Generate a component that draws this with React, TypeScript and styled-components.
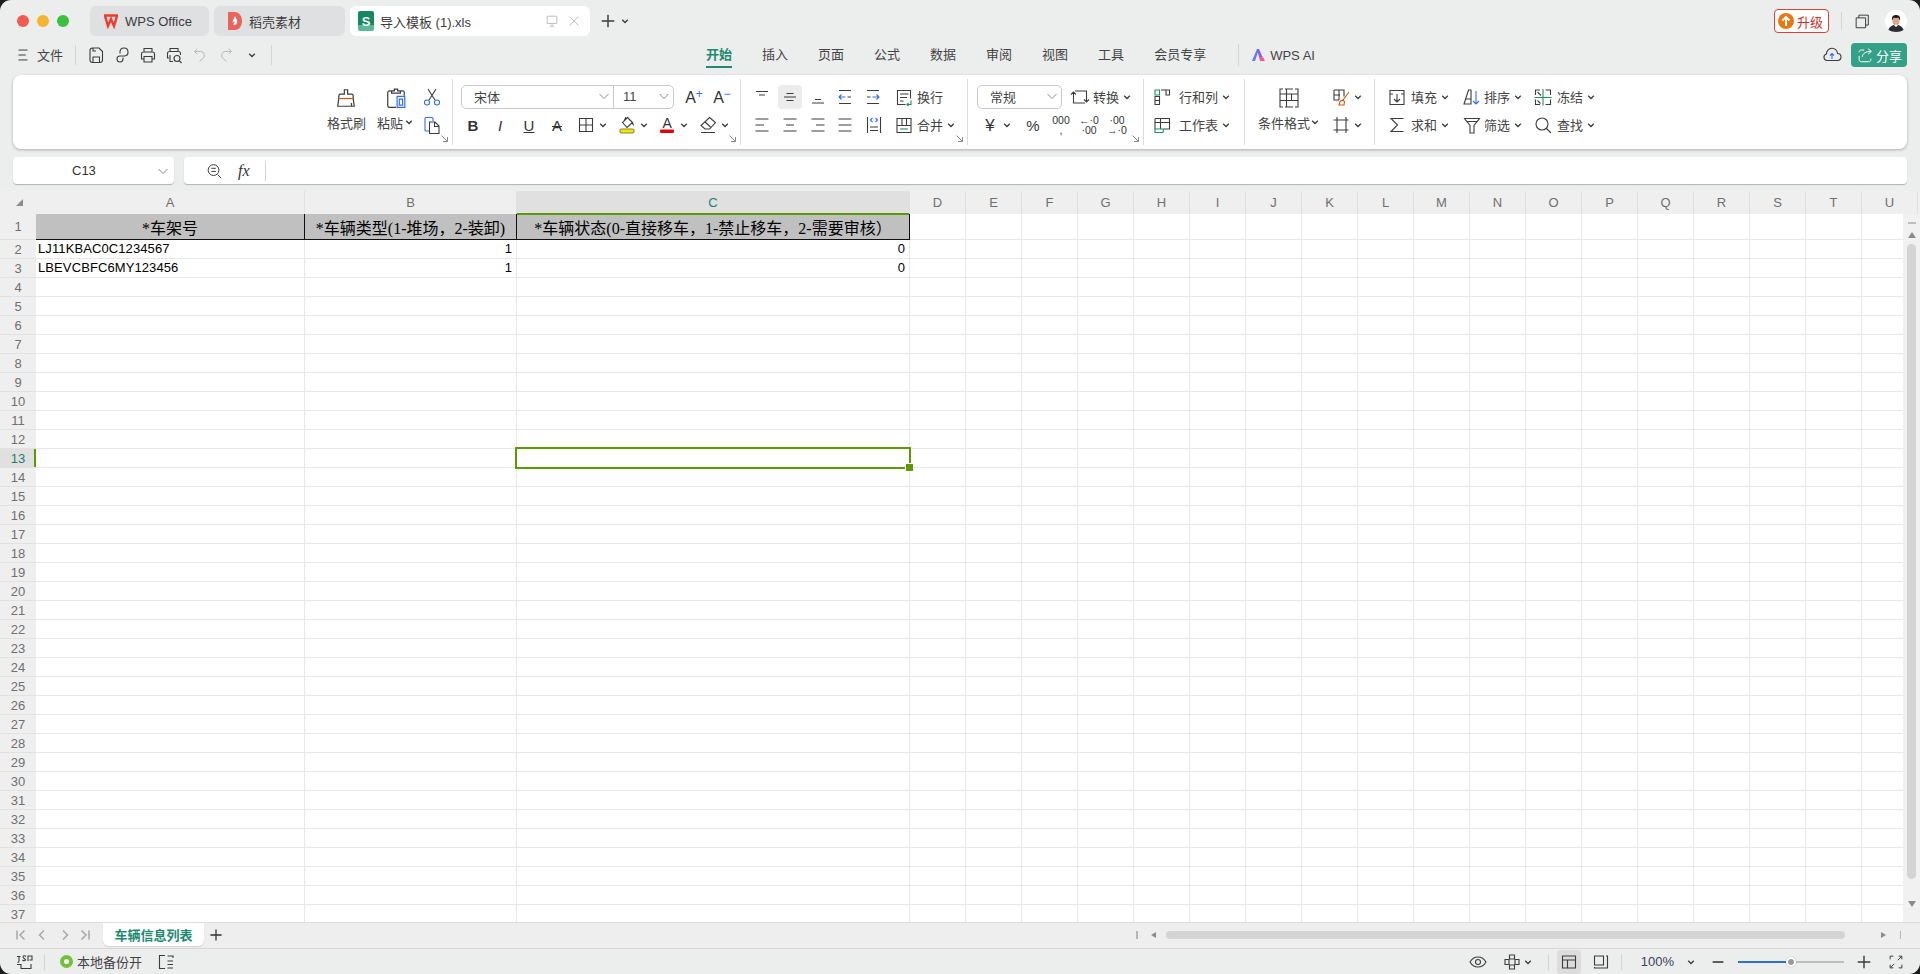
import type { ReactNode } from 'react'
import styled, { createGlobalStyle } from 'styled-components'

const sans = `"Liberation Sans", "Noto Sans CJK SC", sans-serif`

const GlobalStyle = createGlobalStyle`
  html, body { margin: 0; height: 100%; background: #1d1d1f; overflow: hidden; }
  * { box-sizing: border-box; }
`

const Window = styled.div`
  width: 1920px;
  height: 974px;
  display: flex;
  flex-direction: column;
  border-radius: 11px;
  overflow: hidden;
  background: #eceded;
  color: #444;
  font: 13px ${sans};
`

/* ---------- icons ---------- */

const Svg = styled.svg<{ $s: number }>`
  width: ${(p) => p.$s}px;
  height: ${(p) => p.$s}px;
  flex: none;
  fill: none;
  stroke: #3c3c3c;
  stroke-width: 1.1;
  .b { stroke: #2f6fed; }
  .g { stroke: #1f8f5f; }
  .o { stroke: #d2570a; }
  .m { stroke: #b5b5b5; }
`

const icons: Record<string, ReactNode> = {
  menu: <path d="M5 4.500h10M5 10h8M5 15.500h10" />,
  save: <path d="M4 5.500C4 4 5 3 6.500 3H13l3.500 3.500V15c0 1.500-1 2.500-2.500 2.500H6.500C5 17.500 4 16.500 4 15zM7 17.500V12h6.500v5.500M7 3v3h3" />,
  share: <path d="M8 8.500V7a4 4 0 1 1 4.500 4H7.500a3 3 0 1 0 3.500 3V12.500" />,
  print: <path d="M6 7V3.500h8V7M5.500 14H3.500V9c0-1.200.8-2 2-2h9c1.200 0 2 .8 2 2v5h-2M6 11.500h8v5.500H6z" />,
  preview: <path d="M6 6.500V3.500h8v3M5 13H3.500V8.500c0-1.200.8-2 2-2h9c1.200 0 2 .8 2 2V10M6 10v6.500h3M10 13.500a3 3 0 1 0 6 0 3 3 0 1 0-6 0M15 15.500l2.500 2.500" />,
  undo: <path className="m" d="M7 3L4 6l3 3M4 6h6.500a4.500 4.500 0 0 1 2 8.500L9.500 17" />,
  redo: <path className="m" d="M13 3l3 3-3 3M16 6H9.500a4.500 4.500 0 0 0-2 8.500l3 2.500" />,
  painter: (
    <>
      <path d="M8.500 2.500h3v4H15c.8 0 1.500.7 1.500 1.500v2l1 7.500H2.500l1-7.500V8c0-.8.700-1.500 1.500-1.500h3.500zM15 17.500v-3" />
      <path className="o" d="M4 10.500h12.500" />
    </>
  ),
  paste: (
    <>
      <path d="M6 3.500H4c-.8 0-1.500.7-1.500 1.500v12c0 .8.700 1.500 1.500 1.500h6M14 3.500h2c.8 0 1.500.7 1.500 1.500v3M6 5.500v-2h2.500V2h3v1.500H14v2z" />
      <path className="b" d="M11 8.500h7v10h-7zM13 11v5.500h3V11z" />
    </>
  ),
  cut: (
    <>
      <path d="M6 2l7 11M14 2L7 13" />
      <circle className="b" cx="5" cy="15.500" r="2.500" />
      <circle className="b" cx="15" cy="15.500" r="2.500" />
    </>
  ),
  copy: (
    <>
      <path className="b" d="M7 16H4c-.6 0-1-.4-1-1V3.500c0-.6.400-1 1-1h6c.6 0 1 .4 1 1V6" />
      <path d="M7.500 7h5.500l4 4v7.500H7.500zM12.500 7v4.500H17" />
    </>
  ),
  border: <path d="M3.500 3.500h13v13h-13zM10 3.500v13M3.500 10h13" />,
  bucket: (
    <>
      <path d="M10.500 2.500l5 5-5.500 5-4.500-5zM7.500 5l1.500-3M15.500 7.500l1 3" />
      <rect x="3" y="14" width="14" height="4" rx="1.500" fill="#f3e500" stroke="#8a8a3a" />
    </>
  ),
  eraser: <path d="M11.500 2.500l6 5-6 6.500H7L3 10.500zM6.500 6.500l6 5.500M3 17.500h14" />,
  alignT: <path d="M4 4.500h12M7 8h6" />,
  alignM: <path d="M6.500 6.500h7M4 10h12M6.500 13.500h7" />,
  alignB: <path d="M7 12.500h6M4 16h12" />,
  outdent: (
    <>
      <path d="M4 3.500h12M4 16.500h12M12.500 10H16" />
      <path className="b" d="M10.500 10H4M6.500 7.500L4 10l2.500 2.500" />
    </>
  ),
  indent: (
    <>
      <path d="M4 3.500h12M4 16.500h12M4 10h3.500" />
      <path className="b" d="M9.500 10H16M13.500 7.500L16 10l-2.500 2.500" />
    </>
  ),
  wrap: (
    <>
      <path d="M16.500 11.500v-8h-13v14h8M6 7h8.500M6 10.500h7M6 14h3.500" />
      <path className="g" d="M17 13.500v4h-4M14.500 16l-1.500 1.500 1.500 1.500" />
    </>
  ),
  left: <path d="M3.500 4h13M3.500 10H12M3.500 16h13" />,
  center: <path d="M3.500 4h13M6 10h8M3.500 16h13" />,
  right: <path d="M3.500 4h13M8 10h8.500M3.500 16h13" />,
  justify: <path d="M3.500 4h13M3.500 10h13M3.500 16h13" />,
  spread: (
    <>
      <path d="M3.500 2v16M16.500 2v16M6 12h8M6 15.500h8" />
      <path className="b" d="M8.500 3L6.500 5l2 2M11.500 3l2 2-2 2" />
    </>
  ),
  merge: (
    <>
      <path d="M3 3.500h14v14H3zM3 10.500h14M8 3.500v7M12.500 3.500v7" />
      <path className="g" d="M6 14h8" />
    </>
  ),
  convert: <path d="M5 4h11.500v11M14 12.500l2.500 2.500 2.500-2.500M15 16H3.500V5M1 7.500L3.500 5 6 7.500" />,
  rowcol: (
    <>
      <path className="g" d="M3 3h4.500v5H3z" />
      <path d="M9 3h8.500v5H14V3M3 9.500h4.500v8H3zM3 13.500h4.500" />
    </>
  ),
  sheet: (
    <>
      <path d="M3 3.500h14.500V14H12M3 14V3.500M3 7.500h14.500M8.500 3.500v10.500" />
      <path className="g" d="M3 14h8.500L11 17.500H3z" />
    </>
  ),
  cond: <path d="M6 3H3v18h3M18 3h3v18h-3M8 3h8M8 21h8M3 8h18M3 14.500h18M9.500 3v18M14.500 8v6.500" />,
  style: (
    <>
      <path d="M3 3h10v6.500M3 3v10h5M3 8h6M8 3v10" />
      <path className="o" d="M18 5l-6 8M9 14.500c1.500-1.500 3.500-1.500 4.500 0l-.5 3.500H8z" />
    </>
  ),
  crop: <path d="M6 2v16M15 2v16M2.500 5h15M2.500 15h15" />,
  fill: <path d="M3 3.500h14v14H3zM3 7h3M14 7h3M10 7v8M7 12l3 3 3-3" />,
  sum: <path d="M16.500 3.500H4L10.500 10 4 16.500h12.500" />,
  sort: (
    <>
      <path d="M6.500 3H9v14H2zM4 12h5" />
      <path className="b" d="M14 4v13M11 14l3 3 3-3" />
    </>
  ),
  filter: <path d="M2.500 3.500h15L12 10.500v7.500H8v-7.500zM5 6.500h10" />,
  freeze: (
    <>
      <path d="M2.500 8V3H7M12.500 3h5v5M17.500 12.500v5h-5M7 17.500H2.500v-5M4.500 5L8 8.500M4.500 13.500l3 3" />
      <path className="g" d="M1.500 10.500h17M10 2v16.500" />
    </>
  ),
  find: <path d="M3 9a6 6 0 1 0 12 0 6 6 0 1 0-12 0M13.500 13.500L18 18" />,
  formula: <path d="M3.500 9a6 6 0 1 0 12 0 6 6 0 1 0-12 0M7 7h5M7 10.500h5M14 14l4 4" />,
  monitor: <path className="m" d="M4 4h12v9H4zM10 13v3M7 16.500h6" />,
  close: <path className="m" d="M4.500 4.500l11 11M15.500 4.500l-11 11" />,
  plus: <path d="M10 3v14M3 10h14" strokeWidth="1.600" />,
  cloud: (
    <>
      <path d="M6 15.500H5a3.300 3.300 0 0 1-.5-6.500 5.500 5.500 0 0 1 11-.5 3.500 3.500 0 0 1 0 7z" />
      <path className="b" d="M10 14V8.500M8 10.500l2-2 2 2" />
    </>
  ),
  windows: <path d="M3.500 6.500h10.500v11H3.500zM6.500 6.500V3.500h10.500v11H14" />,
  shareOut: <path d="M9 4.500H6c-1.500 0-2.500 1-2.500 2.500M3.500 11v4c0 1.500 1 2.500 2.500 2.500h8c1.500 0 2.500-1 2.500-2.500v-1M7 12c.5-4 4-6 9.500-6M13.500 3l3.500 3-3.500 3" />,
  macro: <path d="M3 4.500h3.500M5 4.500V9c0 1-.6 1.500-1.500 1.500M8.500 8c1 1 2.500 1 3 0s-2.500-1.500-2.500-3 2-1.500 3-.5M14 9V4h4v4h-2.500M3 12.500h4v4h10V12" />,
  backup: <path d="M9 3.500H3.500v13H9M11.500 4H17v2M11.500 9H17M11.500 12.500H17M11.500 16H17" />,
  eye: <path d="M2 10c2-3.500 5-5 8-5s6 1.500 8 5c-2 3.500-5 5-8 5s-6-1.500-8-5zM7.500 10a2.500 2.500 0 1 0 5 0 2.500 2.500 0 1 0-5 0z" />,
  focus: <path d="M7.500 3h5v4h-5zM7.500 13h5v4h-5zM3 7.500h4v5H3zM13 7.500h4v5h-4z" />,
  grid: <path d="M3.500 4h13v12h-13zM3.500 8h13M8.500 8v8" />,
  page: <path d="M3.500 4h9v9h-9zM15 4h1.500v12H3.500v-1" />,
  minus: <path d="M4 10h12" strokeWidth="1.800" />,
  expand: <path d="M3.500 7V3.500H7M13 3.500h3.500V7M16.500 13v3.500H13M7 16.500H3.500V13M4 16l4-4M16 4l-4 4" />,
}

const I = ({ n, s = 20 }: { n: string; s?: number }) => (
  <Svg $s={s} viewBox={n === 'cond' ? '0 0 24 24' : '0 0 20 20'}>
    {icons[n]}
  </Svg>
)

const ChevSvg = styled.svg<{ $ml?: number }>`
  width: 8px;
  height: 8px;
  flex: none;
  margin-left: ${(p) => p.$ml ?? 1}px;
  fill: none;
  stroke: #3c3c3c;
  stroke-width: 1.3;
`

const Chev = ({ ml }: { ml?: number }) => (
  <ChevSvg $ml={ml} viewBox="0 0 8 8">
    <path d="M1.200 2.800L4 5.500l2.800-2.700" />
  </ChevSvg>
)

const ThinChev = styled.svg`
  width: 12px;
  height: 12px;
  flex: none;
  fill: none;
  stroke: #888;
  stroke-width: 1;
`

const Thin = () => (
  <ThinChev viewBox="0 0 12 12">
    <path d="M1.500 4L6 8.500 10.500 4" />
  </ThinChev>
)

const Gap = styled.span<{ $w: number }>`
  width: ${(p) => p.$w}px;
  flex: none;
`

/* ---------- title bar ---------- */

const TitleBar = styled.div`
  height: 42px;
  padding: 6px 0 6px 17px;
  display: flex;
  align-items: center;
`

const Lights = styled.div`
  display: flex;
  gap: 8px;
  margin-right: 21px;
`

const Light = styled.span<{ $c: string }>`
  width: 12px;
  height: 12px;
  border-radius: 50%;
  background: ${(p) => p.$c};
`

const Tab = styled.div<{ $w: number; $active?: boolean }>`
  width: ${(p) => p.$w}px;
  height: 30px;
  margin-right: 5px;
  padding-left: ${(p) => (p.$active ? 8 : 13)}px;
  display: flex;
  align-items: center;
  gap: 6px;
  border-radius: 6px;
  background: ${(p) => (p.$active ? '#fff' : '#dfe0e2')};
  color: #3c3c3c;
`

const SBadge = styled.span`
  width: 16px;
  height: 20px;
  border-radius: 2px;
  display: flex;
  align-items: center;
  justify-content: center;
  background: linear-gradient(#17875f 70%, #5cb894 70%);
  color: #fff;
  font-weight: 700;
  font-size: 13px;
`

const TabTools = styled.div`
  margin-left: auto;
  margin-right: 8px;
  display: flex;
  gap: 6px;
`

const NewTab = styled.div`
  margin-left: 4px;
  display: flex;
  align-items: center;
  gap: 4px;
`

const TitleRight = styled.div`
  margin-left: auto;
  padding-right: 13px;
  display: flex;
  align-items: center;
`

const Upgrade = styled.div`
  width: 55px;
  height: 24px;
  padding-left: 3px;
  display: flex;
  align-items: center;
  gap: 3px;
  border: 1px solid #d8423e;
  border-radius: 4px;
  background: #fff;
  color: #c9302c;
`

const UpDot = styled.span`
  width: 16px;
  height: 16px;
  border-radius: 50%;
  background: #e8780f;
  display: flex;
  align-items: center;
  justify-content: center;
  svg { stroke: #fff; stroke-width: 2; }
`

const VSep = styled.span<{ $h?: number; $ml?: number; $mr?: number }>`
  width: 1px;
  height: ${(p) => p.$h ?? 18}px;
  margin: 0 ${(p) => p.$mr ?? 0}px 0 ${(p) => p.$ml ?? 0}px;
  background: #d4d4d4;
  flex: none;
`

const Avatar = styled.svg`
  width: 22px;
  height: 22px;
  margin-left: 14px;
`

/* ---------- menu row ---------- */

const MenuRow = styled.div`
  height: 26px;
  margin-bottom: 7px;
  display: flex;
  align-items: center;
`

const QuickBar = styled.div`
  width: 706px;
  padding-left: 14px;
  display: flex;
  align-items: center;
`

const Quick = styled.span`
  width: 26px;
  display: flex;
  justify-content: center;
`

const MenuTab = styled.div<{ $active?: boolean }>`
  height: 26px;
  margin-right: 30px;
  padding-bottom: 2px;
  display: flex;
  align-items: center;
  color: ${(p) => (p.$active ? '#1e8a72' : '#444')};
  font-weight: ${(p) => (p.$active ? 700 : 400)};
  border-bottom: 2px solid ${(p) => (p.$active ? '#1e8a72' : 'transparent')};
`

const AiTab = styled.div`
  margin-left: 2px;
  padding-left: 12px;
  display: flex;
  align-items: center;
  gap: 4px;
  border-left: 1px solid #d4d4d4;
  height: 22px;
`

const MenuRight = styled.div`
  margin-left: auto;
  padding-right: 13px;
  display: flex;
  align-items: center;
  gap: 9px;
`

const ShareBtn = styled.div`
  width: 56px;
  height: 24px;
  padding-left: 5px;
  display: flex;
  align-items: center;
  gap: 2px;
  border-radius: 4px;
  background: #34a088;
  color: #fff;
  svg { stroke: #fff; }
`

/* ---------- ribbon ---------- */

const Ribbon = styled.div`
  height: 74px;
  margin: 0 13px;
  display: flex;
  justify-content: center;
  padding: 4px 0;
  border-radius: 8px;
  background: #fff;
  box-shadow: 0 1px 3px rgba(0, 0, 0, 0.28);
`

const Group = styled.div<{ $w: number; $pl: number; $last?: boolean }>`
  position: relative;
  width: ${(p) => p.$w}px;
  padding: 6px 0 0 ${(p) => p.$pl}px;
  display: flex;
  border-right: 1px solid ${(p) => (p.$last ? 'transparent' : '#dcdcdc')};
`

const Rows = styled.div<{ $ml?: number }>`
  margin-left: ${(p) => p.$ml ?? 0}px;
  display: flex;
  flex-direction: column;
  gap: 4px;
`

const Row = styled.div`
  height: 24px;
  display: flex;
  align-items: center;
`

const Btn = styled.span<{ $ml?: number; $active?: boolean }>`
  width: 24px;
  height: 24px;
  margin-left: ${(p) => p.$ml ?? 0}px;
  flex: none;
  display: flex;
  align-items: center;
  justify-content: center;
  border-radius: 4px;
  background: ${(p) => (p.$active ? '#ececec' : 'transparent')};
`

const Label = styled.span<{ $ml?: number }>`
  margin-left: ${(p) => p.$ml ?? 1}px;
  padding-bottom: 2px;
  white-space: nowrap;
`

const Big = styled.div<{ $w: number; $ml?: number }>`
  width: ${(p) => p.$w}px;
  margin-left: ${(p) => p.$ml ?? 0}px;
  display: flex;
  flex-direction: column;
  align-items: center;
`

const BigIcon = styled.div`
  height: 26px;
  display: flex;
  align-items: center;
`

const BigLabel = styled.div`
  height: 24px;
  padding-bottom: 2px;
  align-self: stretch;
  display: flex;
  align-items: center;
  white-space: nowrap;
`

const Select = styled.div<{ $w: number }>`
  width: ${(p) => p.$w}px;
  height: 24px;
  display: flex;
  align-items: center;
  border: 1px solid #c9c9c9;
  border-radius: 5px;
  background: #fff;
`

const SelectPart = styled.div<{ $w: number; $pl: number; $divider?: boolean }>`
  width: ${(p) => p.$w}px;
  height: 100%;
  padding: 0 3px 2px ${(p) => p.$pl}px;
  display: flex;
  align-items: center;
  justify-content: space-between;
  border-right: ${(p) => (p.$divider ? '1px solid #c9c9c9' : 'none')};
`

const Glyph = styled.span<{ $bold?: boolean; $italic?: boolean; $size?: number }>`
  font-family: "Liberation Sans", sans-serif;
  font-size: ${(p) => p.$size ?? 15}px;
  font-weight: ${(p) => (p.$bold ? 700 : 400)};
  font-style: ${(p) => (p.$italic ? 'italic' : 'normal')};
  color: #333;
  line-height: 1;
`

const Tiny = styled.span`
  color: #2f6fed;
  font-size: 12px;
  vertical-align: 5px;
  font-weight: 400;
`

const Mini = styled.span`
  font-family: "Liberation Sans", sans-serif;
  font-size: 10.500px;
  line-height: 10px;
  color: #333;
  text-align: center;
  white-space: nowrap;
`

const Expander = styled.svg`
  position: absolute;
  right: 4px;
  bottom: 3px;
  width: 7px;
  height: 7px;
  fill: none;
  stroke: #888;
  stroke-width: 1;
`

const Expand = () => (
  <Expander viewBox="0 0 7 7">
    <path d="M.5.500l5.500 5.500M6.500 2v4.500H2" />
  </Expander>
)

const ColorBar = () => (
  <Svg $s={20} viewBox="0 0 20 20">
    <text x="5.500" y="12.500" fontSize="14" fontFamily="Liberation Sans" fill="#333" stroke="none">
      A
    </text>
    <rect x="3" y="14.500" width="14" height="3.500" rx="1.200" fill="#e60000" stroke="none" />
  </Svg>
)

/* ---------- formula bar ---------- */

const FormulaRow = styled.div`
  height: 27px;
  margin: 8px 13px 7px;
  display: flex;
  gap: 10px;
`

const NameBox = styled.div`
  width: 161px;
  padding: 0 5px 0 59px;
  display: flex;
  align-items: center;
  justify-content: space-between;
  background: #fff;
  border-radius: 4px;
  box-shadow: 0 1px 1px rgba(0, 0, 0, 0.25);
  color: #333;
`

const FormulaBox = styled.div`
  flex: 1;
  padding-left: 21px;
  display: flex;
  align-items: center;
  background: #fff;
  border-radius: 4px;
  box-shadow: 0 1px 1px rgba(0, 0, 0, 0.25);
`

const Fx = styled.span`
  margin-left: 15px;
  width: 27px;
  font: italic 16px "Liberation Serif", serif;
  color: #333;
`

/* ---------- sheet ---------- */

const gridColumns = '36px 269px 212px 393px repeat(18, 56px)'

const Sheet = styled.div`
  position: relative;
  height: 731px;
  overflow: hidden;
  background: #fff;
`

const HeadRow = styled.div`
  display: grid;
  grid-template-columns: ${gridColumns};
  height: 23px;
  background: #efefef;
`

const ColHead = styled.div<{ $sel?: boolean }>`
  display: flex;
  align-items: center;
  justify-content: center;
  border-right: 1px solid #e0e0e0;
  background: ${(p) => (p.$sel ? '#e0e0e0' : '#efefef')};
  color: ${(p) => (p.$sel ? '#1e7f6c' : '#707070')};
  box-shadow: ${(p) => (p.$sel ? 'inset 0 -1px 0 #5b9a03' : 'none')};
`

const Corner = styled.div`
  display: flex;
  align-items: center;
  justify-content: center;
  padding-left: 2px;
  &::before {
    content: '';
    border-style: solid;
    border-width: 0 0 7px 7px;
    border-color: transparent transparent #8c8c8c transparent;
  }
`

const DataRow = styled.div<{ $h: number }>`
  display: grid;
  grid-template-columns: ${gridColumns};
  height: ${(p) => p.$h}px;
`

const RowHead = styled.div<{ $sel?: boolean }>`
  display: flex;
  align-items: center;
  justify-content: center;
  background: ${(p) => (p.$sel ? '#e0e0e0' : '#efefef')};
  color: ${(p) => (p.$sel ? '#1e7f6c' : '#707070')};
  border-bottom: 1px solid #e2e2e2;
  box-shadow: ${(p) => (p.$sel ? 'inset -2px 0 0 #5b9a03' : 'none')};
`

const Cell = styled.div<{ $right?: boolean }>`
  padding: 0 ${(p) => (p.$right ? 4 : 2)}px 2px 2px;
  display: flex;
  align-items: center;
  justify-content: ${(p) => (p.$right ? 'flex-end' : 'flex-start')};
  border-right: 1px solid #e8e8e8;
  border-bottom: 1px solid #e8e8e8;
  color: #000;
  letter-spacing: 0.1px;
  white-space: nowrap;
`

const TitleCell = styled.div<{ $sel?: boolean }>`
  display: flex;
  align-items: center;
  justify-content: center;
  background: #c0c0c0;
  border-right: 1px solid #111;
  border-bottom: 1px solid #111;
  color: #000;
  font: 16px "Liberation Serif", "Noto Sans CJK SC", serif;
  white-space: nowrap;
  box-shadow: ${(p) => (p.$sel ? 'inset 0 1px 0 #5b9a03' : 'none')};
`

const Selection = styled.div`
  position: absolute;
  left: 515px;
  top: 256px;
  width: 396px;
  height: 22px;
  border: 2px solid #5b9a03;
  &::after {
    content: '';
    position: absolute;
    right: -4px;
    bottom: -4px;
    width: 7px;
    height: 7px;
    background: #5b9a03;
    outline: 1px solid #fff;
  }
`

const VScroll = styled.div`
  position: absolute;
  right: 0;
  top: 23px;
  bottom: 0;
  width: 17px;
  padding-top: 8px;
  display: flex;
  flex-direction: column;
  align-items: center;
  background: #f1f1f1;
`

const Dash = styled.span`
  width: 8px;
  height: 2px;
  margin-bottom: 8px;
  background: #bdbdbd;
`

const triWidth = { up: '0 4px 6px 4px', down: '6px 4px 0 4px', left: '3.5px 5px 3.5px 0', right: '3.5px 0 3.5px 5px' }
const triColor = {
  up: 'transparent transparent #8c8c8c transparent',
  down: '#8c8c8c transparent transparent transparent',
  left: 'transparent #8c8c8c transparent transparent',
  right: 'transparent transparent transparent #8c8c8c',
}

const Tri = styled.span<{ $dir: 'up' | 'down' | 'left' | 'right' }>`
  flex: none;
  width: 0;
  height: 0;
  border-style: solid;
  border-width: ${(p) => triWidth[p.$dir]};
  border-color: ${(p) => triColor[p.$dir]};
`

const VThumb = styled.span`
  width: 9px;
  height: 635px;
  margin: 6px 0 22px;
  border-radius: 5px;
  background: #d4d4d4;
`

/* ---------- sheet tabs + status ---------- */

const TabsBar = styled.div`
  height: 26px;
  padding-left: 12px;
  display: flex;
  align-items: flex-start;
  border-top: 1px solid #dcdcdc;
  background: #eeeeee;
`

const NavIcon = styled.span<{ $w: number }>`
  width: ${(p) => p.$w}px;
  height: 24px;
  display: flex;
  align-items: center;
  justify-content: center;
  svg { fill: none; stroke: #a8a8a8; stroke-width: 1.5; width: 12px; height: 12px; }
`

const SheetTab = styled.div`
  width: 101px;
  height: 23px;
  margin-left: 9px;
  display: flex;
  align-items: center;
  justify-content: center;
  border-radius: 0 0 6px 6px;
  background: #fff;
  color: #1e8a72;
  font-weight: 700;
  box-shadow: 0 1px 1px rgba(0, 0, 0, 0.12);
`

const AddSheet = styled.span`
  margin: 4px 0 0 4px;
  display: flex;
  svg { stroke: #333; }
`

const HScroll = styled.div`
  margin-left: auto;
  height: 24px;
  padding-right: 19px;
  display: flex;
  align-items: center;
`

const SmallBar = styled.span<{ $mr?: number; $ml?: number }>`
  width: 1.5px;
  height: 8px;
  margin: 0 ${(p) => p.$mr ?? 0}px 0 ${(p) => p.$ml ?? 0}px;
  background: #b5b5b5;
`

const HThumb = styled.span`
  width: 679px;
  height: 8px;
  margin: 0 36px 0 10px;
  border-radius: 4px;
  background: #d4d4d4;
`

const StatusBar = styled.div`
  flex: 1;
  padding: 0 15px 0 14px;
  display: flex;
  align-items: center;
  border-top: 1px solid #d6d6d6;
`

const Dot = styled.span`
  width: 13px;
  height: 13px;
  margin: 0 4px 0 15px;
  border: 4px solid #6fc23a;
  border-radius: 50%;
  background: #fff;
`

const StatusRight = styled.div`
  margin-left: auto;
  display: flex;
  align-items: center;
`

const ViewBtn = styled.span<{ $active?: boolean; $mx?: number }>`
  width: 24px;
  height: 24px;
  margin: 0 ${(p) => p.$mx ?? 0}px;
  display: flex;
  align-items: center;
  justify-content: center;
  border-radius: 4px;
  background: ${(p) => (p.$active ? '#dcdcdc' : 'transparent')};
`

const Zoom = styled.span`
  margin: 0 13px 0 19px;
  color: #3c4258;
`

const Slider = styled.div`
  position: relative;
  width: 106px;
  height: 2px;
  margin: 0 11px;
  background: #bdbdbd;
`

const SliderFill = styled.div`
  width: 53px;
  height: 2px;
  background: #2f6fd0;
`

const SliderKnob = styled.span`
  position: absolute;
  left: 48px;
  top: -4px;
  width: 10px;
  height: 10px;
  border-radius: 50%;
  border: 2px solid #fff;
  background: #9a9a9a;
  box-shadow: 0 0 1px rgba(0, 0, 0, 0.4);
`

/* ---------- data ---------- */

const letters = 'ABCDEFGHIJKLMNOPQRSTU'.split('')
const blanks = letters.slice(3)
const rowsData: Record<number, string[]> = {
  2: ['LJ11KBAC0C1234567', '1', '0'],
  3: ['LBEVCBFC6MY123456', '1', '0'],
}
const rowNumbers = Array.from({ length: 36 }, (_, i) => i + 2)
const tabs = ['插入', '页面', '公式', '数据', '审阅', '视图', '工具', '会员专享']

export default function App() {
  return (
    <Window>
      <GlobalStyle />

      <TitleBar>
        <Lights>
          <Light $c="#f25b52" />
          <Light $c="#f5b52e" />
          <Light $c="#3cc13f" />
        </Lights>
        <Tab $w={119}>
          <svg width="16" height="16" viewBox="0 0 16 16">
            <path d="M1 2.500h14M2 3l3 10 3-7 3 7 3-10" fill="none" stroke="#ef3a2c" strokeWidth="2.400" />
          </svg>
          WPS Office
        </Tab>
        <Tab $w={131}>
          <svg width="16" height="20" viewBox="0 0 16 20">
            <path d="M1 1h7c4 0 7 4 7 9s-3 9-7 9H1z" fill="#e9645a" />
            <path d="M8 5c1 3 3 4 2 7-.5 2-3 2.500-4 1 1 0 2-1 1-3-.5 1-1 1-1 2-1-2 1-4 2-7z" fill="#fff" />
          </svg>
          稻壳素材
        </Tab>
        <Tab $w={240} $active>
          <SBadge>S</SBadge>
          导入模板 (1).xls
          <TabTools>
            <I n="monitor" s={16} />
            <I n="close" s={16} />
          </TabTools>
        </Tab>
        <NewTab>
          <I n="plus" s={18} />
          <Chev ml={0} />
        </NewTab>
        <TitleRight>
          <Upgrade>
            <UpDot>
              <svg width="10" height="12" viewBox="0 0 10 12" fill="none">
                <path d="M5 11V2M1.500 5.500L5 2l3.500 3.500" />
              </svg>
            </UpDot>
            升级
          </Upgrade>
          <VSep $ml={12} $mr={11} />
          <I n="windows" s={18} />
          <Avatar viewBox="0 0 22 22">
            <circle cx="11" cy="11" r="11" fill="#fff" />
            <path d="M7 8c0-4 8-4 8 0v2H7z" fill="#1c1c1c" />
            <ellipse cx="11" cy="11" rx="3.600" ry="4.600" fill="#d9a98c" />
            <path d="M7.500 7.500c1-2.500 6-2.500 7 0-2 .5-5 .5-7 0z" fill="#1c1c1c" />
            <path d="M3.500 20c1-3.500 3.500-4.500 5.500-5l2 2 2-2c2 .5 4.500 1.500 5.500 5-3.500 2.500-11 2.500-15 0z" fill="#2a2a30" />
            <path d="M9.300 15l1.700 2 1.700-2-1.700-.5z" fill="#f4f4f4" />
          </Avatar>
        </TitleRight>
      </TitleBar>

      <MenuRow>
        <QuickBar>
          <I n="menu" s={18} />
          <Label $ml={5}>文件</Label>
          <VSep $h={20} $ml={12} $mr={7} />
          <Quick><I n="save" /></Quick>
          <Quick><I n="share" /></Quick>
          <Quick><I n="print" /></Quick>
          <Quick><I n="preview" /></Quick>
          <Quick><I n="undo" s={18} /></Quick>
          <Quick><I n="redo" s={18} /></Quick>
          <Quick><Chev ml={0} /></Quick>
          <VSep $h={20} $ml={6} />
        </QuickBar>
        <MenuTab $active>开始</MenuTab>
        {tabs.map((t) => (
          <MenuTab key={t}>{t}</MenuTab>
        ))}
        <AiTab>
          <svg width="15" height="14" viewBox="0 0 15 14">
            <path d="M1 13L6 1h2L4 13z" fill="#5b7cf5" />
            <path d="M6 1h2l3.500 8H8z" fill="#8a5cf0" />
            <path d="M8 9h4l2 4H9z" fill="#f05c9a" />
          </svg>
          WPS AI
        </AiTab>
        <MenuRight>
          <I n="cloud" />
          <ShareBtn>
            <I n="shareOut" s={18} />
            分享
          </ShareBtn>
        </MenuRight>
      </MenuRow>

      <Ribbon>
        <Group $w={133} $pl={7}>
          <Big $w={38}>
            <BigIcon><I n="painter" s={22} /></BigIcon>
            <BigLabel>格式刷</BigLabel>
          </Big>
          <Big $w={38} $ml={12}>
            <BigIcon><I n="paste" s={22} /></BigIcon>
            <BigLabel>粘贴<Chev ml={2} /></BigLabel>
          </Big>
          <Rows $ml={-1}>
            <Row><Btn $ml={6}><I n="cut" /></Btn></Row>
            <Row><Btn $ml={6}><I n="copy" /></Btn></Row>
          </Rows>
          <Expand />
        </Group>

        <Group $w={288} $pl={8}>
          <Rows>
            <Row>
              <Select $w={213}>
                <SelectPart $w={152} $pl={12} $divider>宋体<Thin /></SelectPart>
                <SelectPart $w={59} $pl={9}>11<Thin /></SelectPart>
              </Select>
              <Btn $ml={8}><Glyph $size={16}>A<Tiny>+</Tiny></Glyph></Btn>
              <Btn $ml={4}><Glyph $size={16}>A<Tiny>−</Tiny></Glyph></Btn>
            </Row>
            <Row>
              <Btn><Glyph $bold>B</Glyph></Btn>
              <Btn $ml={3}><Glyph $italic>I</Glyph></Btn>
              <Btn $ml={5}><Glyph><u>U</u></Glyph></Btn>
              <Btn $ml={4}><Glyph><s>A</s></Glyph></Btn>
              <Btn $ml={5}><I n="border" /></Btn><Chev />
              <Btn $ml={8}><I n="bucket" /></Btn><Chev />
              <Btn $ml={7}><ColorBar /></Btn><Chev />
              <Btn $ml={8}><I n="eraser" /></Btn><Chev />
            </Row>
          </Rows>
          <Expand />
        </Group>

        <Group $w={227} $pl={9}>
          <Rows>
            <Row>
              <Btn><I n="alignT" /></Btn>
              <Btn $ml={4} $active><I n="alignM" /></Btn>
              <Btn $ml={4}><I n="alignB" /></Btn>
              <Btn $ml={3}><I n="outdent" /></Btn>
              <Btn $ml={4}><I n="indent" /></Btn>
              <Btn $ml={7}><I n="wrap" /></Btn>
              <Label>换行</Label>
            </Row>
            <Row>
              <Btn><I n="left" /></Btn>
              <Btn $ml={4}><I n="center" /></Btn>
              <Btn $ml={4}><I n="right" /></Btn>
              <Btn $ml={3}><I n="justify" /></Btn>
              <Btn $ml={5}><I n="spread" /></Btn>
              <Btn $ml={6}><I n="merge" /></Btn>
              <Label>合并</Label>
              <Chev ml={4} />
            </Row>
          </Rows>
          <Expand />
        </Group>

        <Group $w={176} $pl={9}>
          <Rows>
            <Row>
              <Select $w={85}>
                <SelectPart $w={83} $pl={12}>常规<Thin /></SelectPart>
              </Select>
              <Btn $ml={6}><I n="convert" /></Btn>
              <Label>转换</Label>
              <Chev ml={4} />
            </Row>
            <Row>
              <Btn $ml={1}><Glyph $size={17}>¥</Glyph></Btn><Chev />
              <Btn $ml={10}><Glyph $size={15}>%</Glyph></Btn>
              <Btn $ml={4}><Mini>000<br />,</Mini></Btn>
              <Btn $ml={4}><Mini>←·0<br />·00</Mini></Btn>
              <Btn $ml={4}><Mini>·00<br />→·0</Mini></Btn>
            </Row>
          </Rows>
          <Expand />
        </Group>

        <Group $w={101} $pl={6}>
          <Rows>
            <Row>
              <Btn><I n="rowcol" /></Btn>
              <Label $ml={5}>行和列</Label>
              <Chev ml={4} />
            </Row>
            <Row>
              <Btn><I n="sheet" /></Btn>
              <Label $ml={5}>工作表</Label>
              <Chev ml={4} />
            </Row>
          </Rows>
        </Group>

        <Group $w={130} $pl={13}>
          <Big $w={62}>
            <BigIcon><I n="cond" s={24} /></BigIcon>
            <BigLabel>条件格式<Chev ml={1} /></BigLabel>
          </Big>
          <Rows $ml={9}>
            <Row><Btn><I n="style" /></Btn><Chev /></Row>
            <Row><Btn><I n="crop" /></Btn><Chev /></Row>
          </Rows>
        </Group>

        <Group $w={225} $pl={10} $last>
          <Rows>
            <Row>
              <Btn><I n="fill" /></Btn>
              <Label $ml={2}>填充</Label>
              <Chev ml={4} />
              <Btn $ml={11}><I n="sort" /></Btn>
              <Label $ml={0}>排序</Label>
              <Chev ml={4} />
              <Btn $ml={9}><I n="freeze" /></Btn>
              <Label $ml={2}>冻结</Label>
              <Chev ml={4} />
            </Row>
            <Row>
              <Btn><I n="sum" /></Btn>
              <Label $ml={2}>求和</Label>
              <Chev ml={4} />
              <Btn $ml={11}><I n="filter" /></Btn>
              <Label $ml={0}>筛选</Label>
              <Chev ml={4} />
              <Btn $ml={9}><I n="find" /></Btn>
              <Label $ml={2}>查找</Label>
              <Chev ml={4} />
            </Row>
          </Rows>
        </Group>
      </Ribbon>

      <FormulaRow>
        <NameBox>
          C13
          <Thin />
        </NameBox>
        <FormulaBox>
          <I n="formula" s={18} />
          <Fx>fx</Fx>
          <VSep $h={20} />
        </FormulaBox>
      </FormulaRow>

      <Sheet>
        <HeadRow>
          <Corner />
          {letters.map((l) => (
            <ColHead key={l} $sel={l === 'C'}>{l}</ColHead>
          ))}
        </HeadRow>
        <DataRow $h={26}>
          <RowHead>1</RowHead>
          <TitleCell>*车架号</TitleCell>
          <TitleCell>*车辆类型(1-堆场，2-装卸)</TitleCell>
          <TitleCell $sel>*车辆状态(0-直接移车，1-禁止移车，2-需要审核）</TitleCell>
          {blanks.map((l) => (
            <Cell key={l} />
          ))}
        </DataRow>
        {rowNumbers.map((n) => (
          <DataRow key={n} $h={19}>
            <RowHead $sel={n === 13}>{n}</RowHead>
            <Cell>{rowsData[n]?.[0]}</Cell>
            <Cell $right>{rowsData[n]?.[1]}</Cell>
            <Cell $right>{rowsData[n]?.[2]}</Cell>
            {blanks.map((l) => (
              <Cell key={l} />
            ))}
          </DataRow>
        ))}
        <Selection />
        <VScroll>
          <Dash />
          <Tri $dir="up" />
          <VThumb />
          <Tri $dir="down" />
        </VScroll>
      </Sheet>

      <TabsBar>
        <NavIcon $w={18}>
          <svg viewBox="0 0 12 12"><path d="M2 1.500v9M9.500 1.500L5 6l4.500 4.500" /></svg>
        </NavIcon>
        <NavIcon $w={23}>
          <svg viewBox="0 0 12 12"><path d="M8 1.500L3.500 6 8 10.500" /></svg>
        </NavIcon>
        <NavIcon $w={23}>
          <svg viewBox="0 0 12 12"><path d="M4 1.500L8.500 6 4 10.500" /></svg>
        </NavIcon>
        <NavIcon $w={18}>
          <svg viewBox="0 0 12 12"><path d="M10 1.500v9M2.500 1.500L7 6l-4.500 4.500" /></svg>
        </NavIcon>
        <SheetTab>车辆信息列表</SheetTab>
        <AddSheet><I n="plus" s={16} /></AddSheet>
        <HScroll>
          <SmallBar $mr={13} />
          <Tri $dir="left" />
          <HThumb />
          <Tri $dir="right" />
          <SmallBar $ml={14} />
        </HScroll>
      </TabsBar>

      <StatusBar>
        <I n="macro" />
        <VSep $h={16} $ml={10} $mr={0} />
        <Dot />
        本地备份开
        <Gap $w={14} />
        <I n="backup" />
        <StatusRight>
          <I n="eye" />
          <Gap $w={14} />
          <I n="focus" />
          <Chev ml={2} />
          <VSep $h={16} $ml={16} $mr={8} />
          <ViewBtn $active><I n="grid" /></ViewBtn>
          <ViewBtn $mx={8}><I n="page" /></ViewBtn>
          <VSep $h={16} />
          <Zoom>100%</Zoom>
          <Chev ml={0} />
          <Gap $w={14} />
          <I n="minus" s={18} />
          <Slider>
            <SliderFill />
            <SliderKnob />
          </Slider>
          <I n="plus" s={18} />
          <Gap $w={14} />
          <I n="expand" s={18} />
        </StatusRight>
      </StatusBar>
    </Window>
  )
}
